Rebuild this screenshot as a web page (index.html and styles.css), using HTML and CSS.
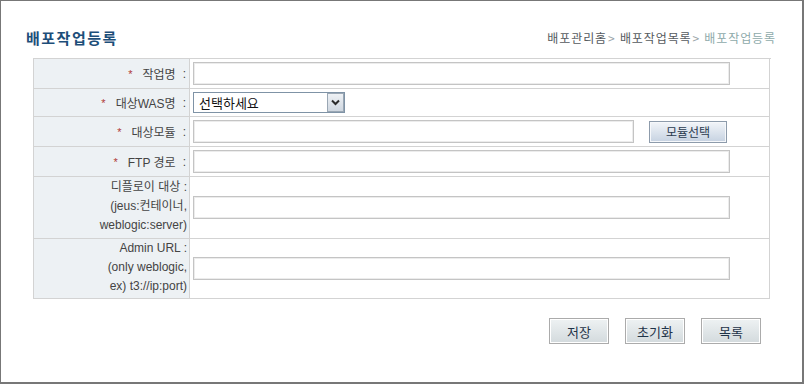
FILE: index.html
```html
<!DOCTYPE html>
<html lang="ko">
<head>
<meta charset="utf-8">
<title>배포작업등록</title>
<link rel="stylesheet" href="styles.css">
</head>
<body>
<div class="frame">
  <div class="header">
    <h1 class="title">배포작업등록</h1>
    <div class="crumb">배포관리홈<span class="gt">&gt;</span> 배포작업목록<span class="gt">&gt;</span> <span class="current">배포작업등록</span></div>
  </div>

  <div class="form-grid">
    <div class="label r1"><span class="req">*</span>작업명<span class="colon">:</span></div>
    <div class="value r1"><input class="text w-full" type="text"></div>

    <div class="label r2"><span class="req">*</span>대상WAS명<span class="colon">:</span></div>
    <div class="value r2">
      <div class="select">
        <span class="select-text">선택하세요</span>
        <span class="select-arrow"><svg width="9" height="7" viewBox="0 0 9 7"><path d="M1 1.5 L4.5 5 L8 1.5" fill="none" stroke="#2b2b2b" stroke-width="2"/></svg></span>
      </div>
    </div>

    <div class="label r3"><span class="req">*</span>대상모듈<span class="colon">:</span></div>
    <div class="value r3"><input class="text w-mid" type="text"><button class="btn-pick" type="button">모듈선택</button></div>

    <div class="label r4"><span class="req">*</span>FTP 경로<span class="colon">:</span></div>
    <div class="value r4"><input class="text w-full" type="text"></div>

    <div class="label r5 multi">디플로이 대상 :<br>(jeus:컨테이너,<br>weblogic:server)</div>
    <div class="value r5"><input class="text w-full" type="text"></div>

    <div class="label r6 multi">Admin URL :<br>(only weblogic,<br>ex) t3://ip:port)</div>
    <div class="value r6"><input class="text w-full" type="text"></div>
  </div>

  <div class="actions">
    <button class="btn" type="button">저장</button>
    <button class="btn" type="button">초기화</button>
    <button class="btn" type="button">목록</button>
  </div>
</div>
</body>
</html>
```

FILE: styles.css
```css
html, body {
  margin: 0;
  padding: 0;
  background: #ffffff;
}

body {
  font-family: "Liberation Sans", "Noto Sans CJK KR", sans-serif;
  font-size: 12px;
  color: #333333;
}

.frame {
  width: 804px;
  height: 384px;
  box-sizing: border-box;
  border-style: solid;
  border-color: #777777;
  border-width: 1px 2px 2px 1px;
  padding-top: 26px;
}

.header {
  display: flex;
  justify-content: space-between;
  align-items: center;
  height: 22px;
  padding: 0 26px 0 25px;
}

.title {
  margin: 0;
  font-family: "Noto Sans CJK KR", sans-serif;
  font-size: 15px;
  font-weight: bold;
  letter-spacing: 1.5px;
  color: #1d4e79;
  line-height: 22px;
}

.crumb {
  font-family: "Noto Sans CJK KR", sans-serif;
  font-size: 12px;
  letter-spacing: 0.9px;
  color: #555a5e;
  line-height: 22px;
}

.crumb .gt {
  color: #9aa4a8;
  margin-left: 1px;
}

.crumb .current {
  color: #8eaaaa;
}

.form-grid {
  display: grid;
  grid-template-columns: 156px 580px;
  grid-template-rows: 30px 28px 30px 30px 62px 60px;
  margin: 9px 0 0 32px;
  width: 737px;
  border-top: 1px solid #d3d3d3;
  border-left: 1px solid #d3d3d3;
}

.label,
.value {
  box-sizing: border-box;
  border-right: 1px solid #d3d3d3;
  border-bottom: 1px solid #d3d3d3;
  display: flex;
  align-items: center;
}

.label {
  background: #edf1f4;
  justify-content: flex-end;
  padding-right: 3px;
  font-family: "Liberation Sans", "Noto Sans CJK KR", sans-serif;
  color: #444444;
  text-align: right;
  white-space: nowrap;
}

.label.multi {
  line-height: 19px;
  padding-right: 2px;
  padding-bottom: 3px;
}

.req {
  color: #b03a3a;
  margin-right: 10px;
  font-size: 11px;
}

.colon {
  margin-left: 7px;
}

.value {
  padding-left: 3px;
}

.text {
  box-sizing: border-box;
  height: 23px;
  margin: 0;
  border: 1px solid #c4c4c4;
  box-shadow: inset 0 0 0 1px #ececec;
  background: #ffffff;
  padding: 0 4px;
  font: inherit;
}

.w-full {
  width: 537px;
}

.w-mid {
  width: 441px;
}

.select {
  display: flex;
  box-sizing: border-box;
  width: 152px;
  height: 21px;
  border: 1px solid #7f93a6;
  background: #ffffff;
}

.select-text {
  flex: 1;
  padding-left: 5px;
  font-family: "Noto Sans CJK KR", sans-serif;
  font-size: 13px;
  line-height: 19px;
  color: #111111;
}

.select-arrow {
  box-sizing: border-box;
  width: 17px;
  display: flex;
  align-items: center;
  justify-content: center;
  border: 1px solid #9aa7b4;
  background: linear-gradient(#eef1f5, #cfd7e0);
}

.btn-pick {
  box-sizing: border-box;
  width: 78px;
  height: 22px;
  margin-left: 15px;
  border: 1px solid #8d9bab;
  box-shadow: inset 0 0 0 1px #f6f8fb;
  background: linear-gradient(#f2f5f9, #c6d2e1);
  font-family: "Noto Sans CJK KR", sans-serif;
  font-size: 12px;
  color: #2a3a4e;
  padding: 0;
}

.actions {
  display: flex;
  justify-content: flex-end;
  gap: 16px;
  margin-top: 19px;
  width: 728px;
  margin-left: 32px;
}

.btn {
  box-sizing: border-box;
  width: 60px;
  height: 26px;
  border: 1px solid #ababab;
  box-shadow: inset 0 0 0 1px #ffffff;
  background: linear-gradient(#eef2f3, #d3dadd);
  font-family: "Noto Sans CJK KR", sans-serif;
  font-size: 13px;
  color: #1f3348;
  padding: 0;
}
```
